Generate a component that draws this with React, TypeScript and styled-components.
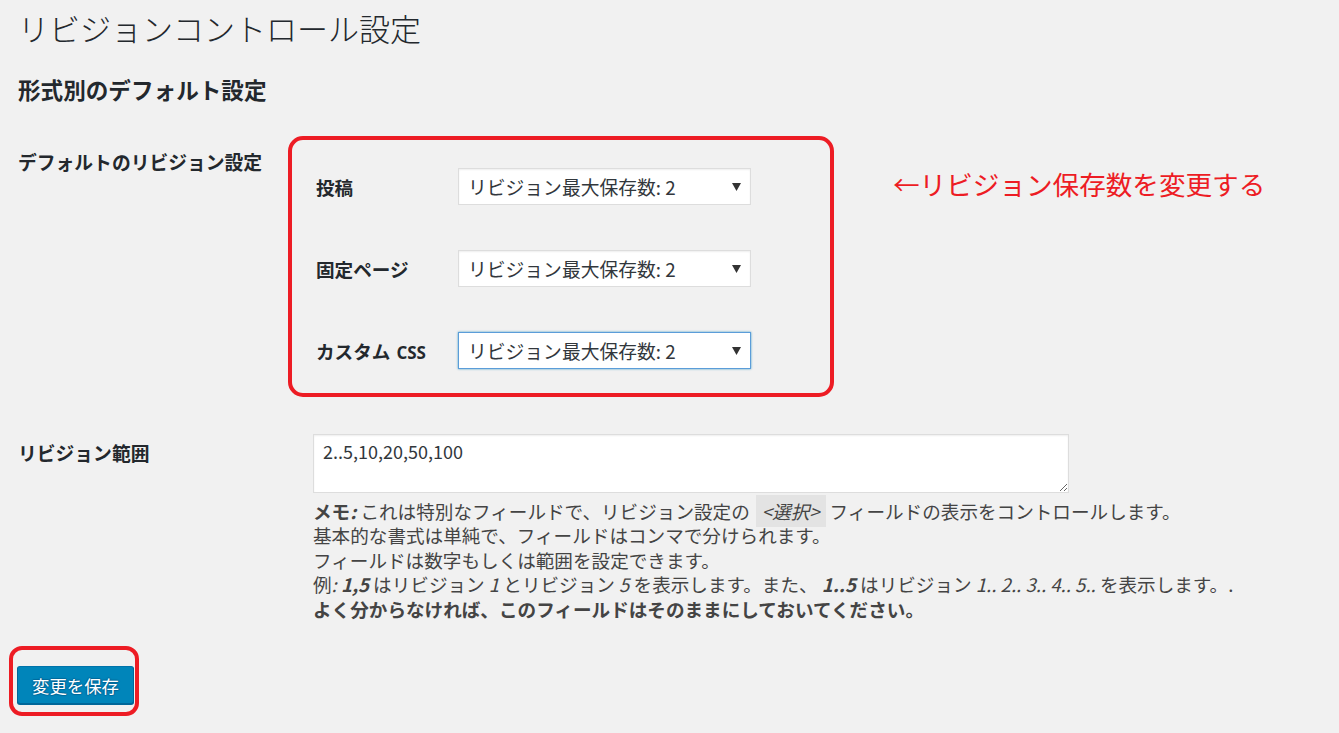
import React from "react";
import styled, { createGlobalStyle } from "styled-components";

const FONT = `"Noto Sans CJK JP", "Noto Sans", "Liberation Sans", sans-serif`;
const RED = "#ed1c24";

const GlobalStyle = createGlobalStyle`
  html, body {
    margin: 0;
    padding: 0;
    background: #f1f1f1;
  }
  body {
    font-family: ${FONT};
    color: #444;
  }
`;

const Page = styled.div`
  padding: 8px 18px 0;
  width: 1339px;
  height: 733px;
  box-sizing: border-box;
  overflow: hidden;
`;

const Title = styled.h1`
  margin: 0;
  font-size: 31px;
  line-height: 40px;
  font-weight: 300;
  color: #23282d;
`;

const SectionTitle = styled.h2`
  margin: 27px 0 0;
  font-size: 22.6px;
  line-height: 30px;
  font-weight: 700;
  color: #23282d;
`;

const FormRow = styled.div<{ $top: number }>`
  display: grid;
  grid-template-columns: 270px auto;
  align-items: start;
  margin-top: ${({ $top }) => $top}px;
`;

const RowLabel = styled.div<{ $offset: number }>`
  padding-top: ${({ $offset }) => $offset}px;
  font-size: 18.8px;
  line-height: 26px;
  font-weight: 700;
  color: #23282d;
  white-space: nowrap;
`;

const RowBody = styled.div`
  display: flex;
  align-items: flex-start;
`;

const Highlight = styled.div`
  border: 4px solid ${RED};
  border-radius: 15px;
  width: 546px;
  height: 261px;
  box-sizing: border-box;
  padding: 28px 0 0 24px;
  display: flex;
  flex-direction: column;
  gap: 45px;
`;

const TypeRow = styled.div`
  display: grid;
  grid-template-columns: 142px 293px;
  align-items: center;
  height: 37px;
`;

const TypeLabel = styled.span`
  font-size: 18.6px;
  font-weight: 700;
  color: #23282d;
  white-space: nowrap;
`;

const Latin = styled.span`
  font-family: "Open Sans", "Liberation Sans", sans-serif;
  font-size: 17px;
  margin-left: 6px;
`;

const SelectWrap = styled.div`
  position: relative;
  width: 293px;
  height: 37px;
`;

const Select = styled.select<{ $focused?: boolean }>`
  appearance: none;
  -webkit-appearance: none;
  width: 100%;
  height: 100%;
  margin: 0;
  padding: 0 30px 0 9px;
  box-sizing: border-box;
  background: #fff;
  border: 1px solid ${({ $focused }) => ($focused ? "#5b9dd9" : "#ddd")};
  box-shadow: ${({ $focused }) =>
    $focused
      ? "0 0 2px rgba(30, 140, 190, 0.8)"
      : "inset 0 1px 2px rgba(0, 0, 0, 0.07)"};
  border-radius: 0;
  font-family: ${FONT};
  font-size: 18.8px;
  color: #32373c;
  outline: none;
`;

const Arrow = styled.svg`
  position: absolute;
  right: 10px;
  top: 15px;
  pointer-events: none;
`;

const Annotation = styled.div`
  margin: 31px 0 0 59px;
  font-size: 26.6px;
  line-height: 34px;
  color: ${RED};
  white-space: nowrap;
`;

const RangeBody = styled.div`
  margin-left: 25px;
`;

const RangeArea = styled.textarea`
  display: block;
  width: 756px;
  height: 59px;
  box-sizing: border-box;
  margin: 0;
  padding: 3px 9px;
  border: 1px solid #ddd;
  box-shadow: inset 0 1px 2px rgba(0, 0, 0, 0.07);
  background: #fff;
  font-family: ${FONT};
  font-size: 18px;
  line-height: 26px;
  color: #32373c;
  outline: none;
`;

const Description = styled.div`
  margin-top: 6px;
  font-size: 18.6px;
  line-height: 24.4px;
  color: #444;
  white-space: nowrap;
`;

const Line = styled.div``;

const Code = styled.code`
  font-family: ${FONT};
  font-style: italic;
  background: #e3e3e3;
  padding: 2px 6px 3px;
  margin: 0 4px 0 6px;
`;

const SaveFrame = styled.div`
  display: inline-block;
  margin: 25px 0 0 -9px;
  border: 4px solid ${RED};
  border-radius: 13px;
  padding: 16px 1px 8px 4px;
`;

const SaveButton = styled.button`
  display: block;
  height: 38px;
  padding: 0 14px;
  border: 1px solid;
  border-color: #0073aa #006799 #006799;
  border-radius: 3px;
  background: #0085ba;
  box-shadow: 0 1px 0 #006799;
  color: #fff;
  text-shadow: 0 -1px 1px #006799, 1px 0 1px #006799, 0 1px 1px #006799,
    -1px 0 1px #006799;
  font-family: ${FONT};
  font-size: 17.4px;
  cursor: pointer;
`;

const postTypes = [
  { key: "post", label: "投稿" },
  { key: "page", label: "固定ページ" },
  { key: "css", label: "カスタム", latin: "CSS", focused: true },
];

const DropArrow = () => (
  <Arrow width="9" height="8" viewBox="0 0 9 8">
    <path d="M0 0 H9 L4.5 8 Z" fill="#333" />
  </Arrow>
);

export default function App() {
  return (
    <Page>
      <GlobalStyle />
      <Title>リビジョンコントロール設定</Title>
      <SectionTitle>形式別のデフォルト設定</SectionTitle>

      <FormRow $top={31}>
        <RowLabel $offset={13}>デフォルトのリビジョン設定</RowLabel>
        <RowBody>
          <Highlight>
            {postTypes.map((type) => (
              <TypeRow key={type.key}>
                <TypeLabel>
                  {type.label}
                  {type.latin && <Latin>{type.latin}</Latin>}
                </TypeLabel>
                <SelectWrap>
                  <Select $focused={type.focused} defaultValue="2">
                    <option value="2">リビジョン最大保存数: 2</option>
                  </Select>
                  <DropArrow />
                </SelectWrap>
              </TypeRow>
            ))}
          </Highlight>
          <Annotation>←リビジョン保存数を変更する</Annotation>
        </RowBody>
      </FormRow>

      <FormRow $top={37}>
        <RowLabel $offset={6}>リビジョン範囲</RowLabel>
        <RangeBody>
          <RangeArea defaultValue="2..5,10,20,50,100" />
          <Description>
            <Line>
              <strong>
                メモ<em>:</em>
              </strong>{" "}
              これは特別なフィールドで、リビジョン設定の
              <Code>&lt;選択&gt;</Code>
              フィールドの表示をコントロールします。
            </Line>
            <Line>基本的な書式は単純で、フィールドはコンマで分けられます。</Line>
            <Line>フィールドは数字もしくは範囲を設定できます。</Line>
            <Line>
              例<em>:</em>{" "}
              <strong>
                <em>1,5</em>
              </strong>{" "}
              はリビジョン <em>1</em> とリビジョン <em>5</em>{" "}
              を表示します。また、{" "}
              <strong>
                <em>1..5</em>
              </strong>{" "}
              はリビジョン <em>1.. 2.. 3.. 4.. 5..</em> を表示します。.
            </Line>
            <Line>
              <strong>よく分からなければ、このフィールドはそのままにしておいてください。</strong>
            </Line>
          </Description>
        </RangeBody>
      </FormRow>

      <SaveFrame>
        <SaveButton type="button">変更を保存</SaveButton>
      </SaveFrame>
    </Page>
  );
}
